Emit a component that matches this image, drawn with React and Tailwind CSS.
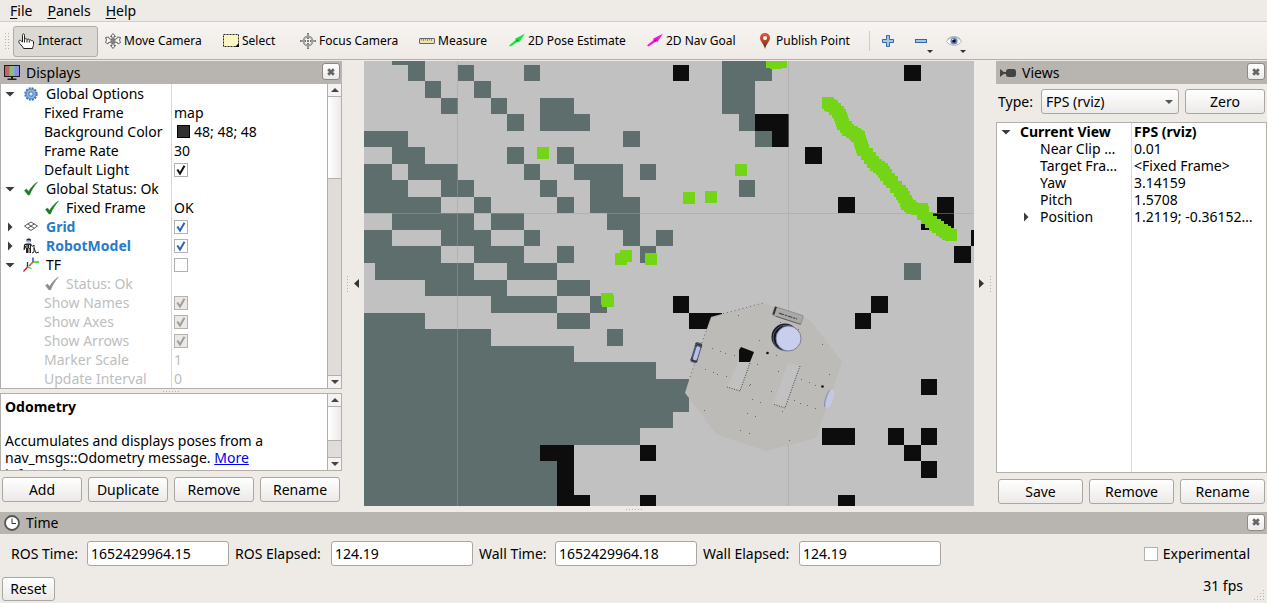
import React from "react";

const BUTTON =
  "rounded-[3px] border border-[#aaa6a2] bg-linear-to-b from-white to-[#eceae8] text-center";

/* ---------- icons ---------- */

function HandIcon() {
  return (
    <svg viewBox="0 0 16 16" className="size-4 shrink-0">
      <path
        d="M4.500 9V2.300c0-2 2-2 2 0V6.500c.2-1.200 2.300-1.200 2.500.2.3-1 2.200-.8 2.300.5.5-.8 2-.5 2 .7.5-.6 2.200-.4 2.200.9v2.700c0 1.500-.9 2-.9 4H5.500C5.200 13.300 1 10.800.7 8.600c-.1-1.600 1.800-1.700 2.400-.7z"
        fill="#fff"
        stroke="#222"
      />
      <path d="M6.500 6.500v3M9 7v2.500M11.300 7.500v2" stroke="#222" fill="none" />
    </svg>
  );
}

function MoveIcon() {
  return (
    <svg viewBox="0 0 16 16" className="size-4 shrink-0" fill="#f6f3f0" stroke="#555" strokeWidth="0.9">
      <path d="M8 .5 10.500 3.500H9V6H7V3.500H5.500zM8 15.500 5.500 12.500H7V10h2v2.500h1.500z" />
      <path d="M.5 4.500 3.500 4 4 5.500 7.500 7 7 9 3.500 9.500 3 11 .5 9.500 1.500 7zM15.500 4.500 12.500 4 12 5.500 8.500 7 9 9l3.500.5.5 1.500 2.500-1.500-1-2.500z" />
      <circle cx="8" cy="8" r="2" />
      <path d="M8 6.500v3M6.500 8h3" />
    </svg>
  );
}

function SelectIcon() {
  return (
    <svg viewBox="0 0 16 16" className="size-4 shrink-0">
      <rect x=".5" y="1.500" width="15" height="12" fill="#fbf5c0" stroke="#222" strokeDasharray="2 1" />
      <path d="M16 10v4h-4z" fill="#000" />
    </svg>
  );
}

function FocusIcon() {
  return (
    <svg viewBox="0 0 16 16" className="size-4 shrink-0" fill="none" stroke="#777">
      <circle cx="8" cy="8" r="4.500" strokeWidth="1.800" />
      <circle cx="8" cy="8" r="4.500" stroke="#ddd" strokeWidth=".6" />
      <path d="M8 0v6M8 10v6M0 8h6M10 8h6" strokeWidth="2" />
      <path d="M8 1v4M8 11v4M1 8h4M11 8h4" stroke="#ddd" strokeWidth=".7" />
      <path d="M7 8h2M8 7v2" stroke="#555" />
    </svg>
  );
}

function MeasureIcon() {
  return (
    <svg viewBox="0 0 16 16" className="size-4 shrink-0">
      <rect x=".5" y="5.500" width="15" height="5" rx=".5" fill="#ece3ae" stroke="#666" />
      <path d="M2.500 6v1.500M4.500 6v2M6.500 6v1.500M8.500 6v2M10.500 6v1.500M12.500 6v2" stroke="#777" strokeWidth=".8" />
    </svg>
  );
}

function ArrowIcon({ color, dark }) {
  return (
    <svg viewBox="0 0 16 16" className="size-4 shrink-0">
      <path d="M0 12.500 6.500 7 6 5.800 15.800.8 10.500 9 9 8.500 1.500 13.500z" fill={color} />
      <path d="m7 8 2.500-2L9 8.500z" fill={dark} />
    </svg>
  );
}

function PinIcon() {
  return (
    <svg viewBox="0 0 16 16" className="size-4 shrink-0">
      <defs>
        <linearGradient id="pin" x1="0" y1="0" x2="0" y2="1">
          <stop offset="0" stopColor="#ea5233" />
          <stop offset=".5" stopColor="#b8442a" />
          <stop offset="1" stopColor="#3d2a18" />
        </linearGradient>
      </defs>
      <path d="M8 0c3 0 5 2.200 5 5 0 3.500-4 6-5 11C7 11 3 8.500 3 5c0-2.800 2-5 5-5z" fill="url(#pin)" />
      <circle cx="8" cy="5" r="2" fill="#fff" />
    </svg>
  );
}

function PlusIcon() {
  return (
    <svg viewBox="0 0 16 16" className="size-4 shrink-0">
      <path d="M6.500 2.500h3v4h4v3h-4v4h-3v-4h-4v-3h4z" fill="#a9c5e6" stroke="#3465a4" />
    </svg>
  );
}

function MinusIcon() {
  return (
    <svg viewBox="0 0 16 16" className="size-4 shrink-0">
      <rect x="2.500" y="6.500" width="11" height="3" fill="#a9c5e6" stroke="#3465a4" />
    </svg>
  );
}

function EyeIcon() {
  return (
    <svg viewBox="0 0 16 16" className="size-4 shrink-0">
      <path d="M.5 8.500C4 2.500 12 2.500 15.500 8.500 12 13.500 4 13.500.5 8.500z" fill="#fbfbfb" stroke="#b5b3b0" />
      <path d="M1.500 6.500C4.500 2.800 11.500 2.800 14.500 6.500" fill="none" stroke="#aaa" />
      <circle cx="8" cy="8" r="3.600" fill="#6f86c4" />
      <circle cx="8" cy="8" r="1.800" fill="#0c1230" />
      <circle cx="6.800" cy="6.500" r=".8" fill="#dfe6ff" />
    </svg>
  );
}

function MonitorIcon() {
  return (
    <svg viewBox="0 0 16 16" className="size-4 shrink-0">
      <path d="M1 1h4.700v10H1z" fill="#c06464" />
      <path d="M5.700 1h4.600v10H5.700z" fill="#7cc57c" />
      <path d="M10.300 1H15v10h-4.700z" fill="#8f8fe0" />
      <rect x=".5" y=".5" width="15" height="11" fill="none" stroke="#1a1a1a" />
      <path d="M7 12h2v1.500h3.500v1.500h-9v-1.500H7z" fill="#222" />
    </svg>
  );
}

function CameraIcon() {
  return (
    <svg viewBox="0 0 16 16" className="size-4 shrink-0" fill="#444">
      <path d="m0 4 5 4-5 4zM4 7h3v2H4z" />
      <rect x="6" y="4" width="10" height="8" rx="2.500" />
    </svg>
  );
}

function ClockIcon() {
  return (
    <svg viewBox="0 0 16 16" className="size-4 shrink-0">
      <circle cx="8" cy="8" r="7" fill="#fff" stroke="#555" strokeWidth="1.800" />
      <path d="M8 3.500v5h4" fill="none" stroke="#333" />
    </svg>
  );
}

function GearIcon() {
  return (
    <svg viewBox="0 0 16 16" className="size-4 shrink-0">
      <circle cx="8" cy="8" r="5.700" fill="none" stroke="#3f74b5" strokeWidth="2" strokeDasharray="1.900 1.080" />
      <circle cx="8" cy="8" r="5" fill="#8fb3dd" stroke="#3f74b5" strokeWidth=".8" />
      <circle cx="8" cy="8" r="2.200" fill="#dce8f5" stroke="#3f74b5" />
    </svg>
  );
}

function TickIcon({ color }) {
  return (
    <svg viewBox="0 0 16 16" className="size-4 shrink-0">
      <path d="M1.500 9.500 3.500 8l2 2.600C7.500 7 10.500 3.500 14.500 1 11 5 8.500 9 6.500 14H5z" fill={color} stroke={color} strokeWidth=".5" />
    </svg>
  );
}

function GridIcon() {
  return (
    <svg viewBox="0 0 16 16" className="size-4 shrink-0" fill="none" stroke="#444" strokeWidth=".9">
      <path d="m1.500 7 6.500-4 6.500 4-6.500 4.500zM4.800 5 11.200 9.200M11.200 5 4.800 9.200" />
    </svg>
  );
}

function RobotIcon() {
  return (
    <svg viewBox="0 0 16 16" className="size-4 shrink-0">
      <path d="M3.500 1.500C4 0 7.500 0 8 1.500v2H3.500z" fill="#222a4a" />
      <path d="M4 2.200h3.500v.8H4z" fill="#8ea4d8" />
      <path d="M4 3.500h3.500v2H4z" fill="#ddd" />
      <path d="M1 6.500 3 5.500h5l1 2-1 1v6.500H6.500v-4l-1-1V15H3V9L1.500 12H.5z" fill="#222" />
      <path d="M4 7v3M6.500 7v3M2 7.500h1" stroke="#fff" strokeWidth=".8" />
      <path d="M9 8.500 11 7v7M11 10l2 5 3-1M9 15l2-1" stroke="#222" fill="none" />
    </svg>
  );
}

function AxesIcon() {
  return (
    <svg viewBox="0 0 16 16" className="size-4 shrink-0" fill="none" strokeWidth="1.300">
      <path d="M4.500 10V5M10 5V.5" stroke="#22d" />
      <path d="M4.500 10 8.500 11.500M10 5h6" stroke="#0d2" />
      <path d="M4.500 10 .5 14.500M10 5 6 9" stroke="#e01010" />
      <path d="m4.500 10 5.500-5" stroke="#d9a020" strokeWidth=".7" />
    </svg>
  );
}

function Caret({ open }) {
  return (
    <svg viewBox="0 0 10 10" className="size-[10px] shrink-0" fill="#3c3c3c">
      <path d={open ? "M.5 3h9L5 7.500z" : "M3 .5v9L7.500 5z"} />
    </svg>
  );
}

function DropCaret() {
  return (
    <svg viewBox="0 0 6 3" className="absolute -right-1 -bottom-1 h-[3px] w-[6px]" fill="#333">
      <path d="M0 0h6L3 3z" />
    </svg>
  );
}

/* ---------- shared controls ---------- */

function Check({ label, tint = "#111", checked, disabled }) {
  return (
    <span className="grid size-[14px] shrink-0">
      <input
        type="checkbox"
        aria-label={label}
        defaultChecked={checked}
        disabled={disabled}
        className="peer col-start-1 row-start-1 size-[14px] appearance-none border border-[#b5b1ad] bg-white disabled:bg-[#ebe8e5]"
      />
      <svg
        viewBox="0 0 14 14"
        className="pointer-events-none col-start-1 row-start-1 hidden size-[14px] peer-checked:block"
      >
        <path d="M3.300 6.500 6 10.500 10.500 2.800" fill="none" stroke={tint} strokeWidth="2" />
      </svg>
    </span>
  );
}

function PanelHeader({ icon, title, size = "h-[23px]" }) {
  return (
    <header className={"flex items-center gap-1.5 bg-[#b8b4b0] pr-0.5 pl-1 " + size}>
      {icon}
      <h2 className="flex-1">{title}</h2>
      <button
        aria-label={"Close " + title}
        className="mb-0.5 flex h-[17px] w-[18px] items-center justify-center rounded-[3px] border border-[#8d8985] bg-linear-to-b from-white to-[#eceae8]"
      >
        <svg viewBox="0 0 8 8" className="size-2">
          <path d="m1.200 1.200 5.600 5.600M6.800 1.200 1.200 6.800" stroke="#666" strokeWidth="2.800" />
        </svg>
      </button>
    </header>
  );
}

function Scrollbar({ thumb }) {
  const arrow = "flex h-[13px] shrink-0 items-center justify-center bg-[#f5f3f1]";
  return (
    <div aria-hidden="true" className="flex w-[14px] shrink-0 flex-col border-l border-[#b3afab] bg-[#dfdcd9]">
      <div className={arrow + " border-b border-[#b3afab]"}>
        <svg viewBox="0 0 8 4" className="h-1 w-2" fill="#444">
          <path d="M0 4h8L4 0z" />
        </svg>
      </div>
      <div className={"shrink-0 border-b border-[#b3afab] bg-linear-to-r from-white to-[#eceae8] " + thumb} />
      <div className="flex-1" />
      <div className={arrow + " border-t border-[#b3afab]"}>
        <svg viewBox="0 0 8 4" className="h-1 w-2" fill="#444">
          <path d="M0 0h8L4 4z" />
        </svg>
      </div>
    </div>
  );
}

function Dots({ vertical, tall }) {
  return vertical ? (
    <svg viewBox="0 0 1 16" className={tall ? "h-4 w-px" : "h-4 w-px"} shapeRendering="crispEdges">
      <path d="M.5 0v16" stroke="#b3afab" strokeDasharray="1 2" />
    </svg>
  ) : (
    <svg viewBox="0 0 16 1" className="h-px w-4" shapeRendering="crispEdges">
      <path d="M0 .5h16" stroke="#b3afab" strokeDasharray="1 2" />
    </svg>
  );
}

/* ---------- menu and tool bar ---------- */

const MENUS = ["File", "Panels", "Help"];

const TOOLS = [
  { label: "Interact", icon: <HandIcon />, size: "w-[85px]", active: true },
  { label: "Move Camera", icon: <MoveIcon />, size: "w-[118px]" },
  { label: "Select", icon: <SelectIcon />, size: "w-[77px]" },
  { label: "Focus Camera", icon: <FocusIcon />, size: "w-[119px]" },
  { label: "Measure", icon: <MeasureIcon />, size: "w-[90px]" },
  { label: "2D Pose Estimate", icon: <ArrowIcon color="#12e83a" dark="#0b7a20" />, size: "w-[138px]" },
  { label: "2D Nav Goal", icon: <ArrowIcon color="#f516d8" dark="#8a0b78" />, size: "w-[110px]" },
  { label: "Publish Point", icon: <PinIcon />, size: "w-[113px]" },
];

function MenuBar() {
  return (
    <nav className="flex h-[22px] items-center gap-[15px] border-b border-[#d2cecb] px-2.5">
      {MENUS.map((name) => (
        <button key={name}>
          <span className="underline underline-offset-2">{name[0]}</span>
          {name.slice(1)}
        </button>
      ))}
    </nav>
  );
}

function ToolBar() {
  return (
    <div
      role="toolbar"
      className="flex h-[38px] items-center border-b border-[#b3afab] bg-linear-to-b from-[#f7f4f1] to-[#eeeae6] pt-px pl-[5px] text-xs"
    >
      <div className="flex w-[8px] gap-0.5">
        <Dots vertical />
        <Dots vertical />
      </div>
      {TOOLS.map((tool) => (
        <button
          key={tool.label}
          aria-pressed={!!tool.active}
          className={
            "flex h-[31px] shrink-0 items-center rounded-[3px] border whitespace-nowrap " +
            tool.size +
            (tool.active
              ? " gap-1 border-[#b0aca8] bg-[#dcd9d5] px-1"
              : " gap-[3px] border-transparent px-1.5")
          }
        >
          {tool.icon}
          {tool.label}
        </button>
      ))}
      <div className="ml-1.5 h-5 w-px bg-[#cfcbc7]" />
      <div className="flex gap-[17px] pl-2.5">
        <button aria-label="Add tool">
          <PlusIcon />
        </button>
        <button aria-label="Remove tool" className="relative">
          <MinusIcon />
          <DropCaret />
        </button>
        <button aria-label="Tool bar visibility" className="relative">
          <EyeIcon />
          <DropCaret />
        </button>
      </div>
    </div>
  );
}

/* ---------- displays panel ---------- */

const GREEN = "#1d7a26";
const DISPLAY_ROWS = [
  { name: "Global Options", caret: "open", icon: <GearIcon /> },
  { name: "Fixed Frame", value: "map" },
  { name: "Background Color", value: "48; 48; 48", swatch: true },
  { name: "Frame Rate", value: "30" },
  { name: "Default Light", check: { checked: true } },
  { name: "Global Status: Ok", caret: "open", icon: <TickIcon color={GREEN} /> },
  { name: "Fixed Frame", value: "OK", childIcon: <TickIcon color={GREEN} /> },
  { name: "Grid", caret: "closed", icon: <GridIcon />, enabled: true, check: { checked: true, tint: "#2a66ad" } },
  { name: "RobotModel", caret: "closed", icon: <RobotIcon />, enabled: true, check: { checked: true, tint: "#2a66ad" } },
  { name: "TF", caret: "open", icon: <AxesIcon />, check: {} },
  { name: "Status: Ok", muted: true, childIcon: <TickIcon color="#8c8c8c" /> },
  { name: "Show Names", muted: true, check: { checked: true, disabled: true, tint: "#a09d9a" } },
  { name: "Show Axes", muted: true, check: { checked: true, disabled: true, tint: "#a09d9a" } },
  { name: "Show Arrows", muted: true, check: { checked: true, disabled: true, tint: "#a09d9a" } },
  { name: "Marker Scale", muted: true, value: "1" },
  { name: "Update Interval", muted: true, value: "0" },
];

function DisplayRow({ row }) {
  const tone = row.muted ? "text-[#bebebe]" : row.enabled ? "font-bold text-[#2a7ac6]" : "";
  return (
    <tr className={"h-[19px] " + tone}>
      <td className="w-[171px] p-0">
        {row.caret ? (
          <div className="flex h-[19px] items-center border-r border-[#dcdad8] pl-1">
            <Caret open={row.caret === "open"} />
            <span className="flex w-[31px] justify-center">{row.icon}</span>
            {row.name}
          </div>
        ) : (
          <div className="flex h-[19px] items-center gap-1.5 border-r border-[#dcdad8] pl-[43px] whitespace-nowrap">
            {row.childIcon}
            {row.name}
          </div>
        )}
      </td>
      <td className="p-0">
        <div className="flex h-[19px] items-center pl-0.5">
          {row.swatch && <span className="mr-1 ml-[3px] size-[13px] border border-black bg-[#303030]" />}
          {row.check && <Check label={row.name} {...row.check} />}
          {row.value}
        </div>
      </td>
    </tr>
  );
}

function DisplaysPanel() {
  return (
    <section className="flex w-[342px] shrink-0 flex-col pb-1">
      <PanelHeader icon={<MonitorIcon />} title="Displays" />
      <div className="flex flex-1 border border-t-0 border-[#b3afab] bg-white">
        <div className="min-w-0 flex-1">
          <table className="w-full table-fixed border-collapse">
            <tbody>
              {DISPLAY_ROWS.map((row, i) => (
                <DisplayRow key={i} row={row} />
              ))}
            </tbody>
          </table>
        </div>
        <Scrollbar thumb="h-[82px]" />
      </div>
      <div className="flex h-1 items-center justify-center">
        <Dots />
      </div>
      <div className="flex h-[78px] overflow-hidden border border-[#b3afab] bg-white">
        <div className="flex-1 overflow-hidden p-1 leading-[17px]">
          <h3 className="mb-[17px] font-bold">Odometry</h3>
          <p>
            Accumulates and displays poses from a nav_msgs::Odometry message.{" "}
            <a href="#odometry" className="text-[#0000ee] underline">
              More
              <br />
              information
            </a>
            .
          </p>
        </div>
        <Scrollbar thumb="h-[34px]" />
      </div>
      <div className="mt-1.5 grid grid-cols-4 gap-1.5 px-0.5">
        {["Add", "Duplicate", "Remove", "Rename"].map((name) => (
          <button key={name} className={BUTTON + " h-[25px]"}>
            {name}
          </button>
        ))}
      </div>
    </section>
  );
}

/* ---------- map view ---------- */

const CELL = 16.54;
// Each entry is [row, first column, end column] in occupancy grid cells.
const UNKNOWN = [
  [0, 2, 4], [0, 22, 25],
  [1, 3, 4], [1, 6, 7], [1, 10, 11], [1, 22, 25],
  [2, 4, 5], [2, 7, 8], [2, 22, 24],
  [3, 5, 6], [3, 8, 9], [3, 11, 13], [3, 22, 24],
  [4, 9, 10], [4, 11, 14], [4, 23, 24],
  [5, 0, 3], [5, 16, 17], [5, 24, 25],
  [6, 2, 4], [6, 9, 10], [6, 12, 13],
  [7, 0, 2], [7, 3, 6], [7, 10, 11], [7, 13, 16], [7, 17, 18],
  [8, 0, 3], [8, 5, 7], [8, 11, 12], [8, 14, 16], [8, 23, 24],
  [9, 0, 5], [9, 7, 8], [9, 12, 13], [9, 14, 17],
  [10, 2, 7], [10, 8, 10], [10, 15, 17],
  [11, 0, 2], [11, 5, 8], [11, 10, 11], [11, 16, 17], [11, 18, 19],
  [12, 0, 5], [12, 7, 10], [12, 12, 13], [12, 17, 18],
  [13, 1, 7], [13, 9, 12], [13, 33, 34],
  [14, 4, 9], [14, 12, 14],
  [15, 8, 12], [15, 14, 15],
  [16, 0, 4], [16, 12, 14],
  [17, 0, 8], [17, 15, 16],
  [18, 0, 13], [19, 0, 18], [20, 0, 20], [21, 0, 20], [22, 0, 19], [23, 0, 17],
  [24, 0, 11], [25, 0, 12], [26, 0, 12], [27, 0, 12],
];
const OCCUPIED = [
  [1, 19, 20], [1, 33, 34], [4, 24, 26], [5, 25, 26], [6, 27, 28],
  [9, 29, 30], [9, 35, 36], [10, 34, 36], [11, 37, 38], [12, 36, 37],
  [15, 19, 20], [15, 31, 32], [16, 20, 22], [16, 30, 31], [20, 34, 35],
  [23, 28, 30], [23, 32, 33], [23, 34, 35], [24, 11, 13], [24, 17, 18],
  [24, 33, 34], [25, 12, 13], [25, 34, 35], [26, 12, 13],
  [27, 12, 14], [27, 17, 18], [27, 29, 30],
];
const WALL = [
  [464, 42], [468, 45], [474, 51], [477, 57], [479, 63], [484, 69], [491, 73], [495, 76],
  [497, 83], [499, 89], [506, 97], [512, 104], [518, 108], [522, 114], [528, 121],
  [536, 130], [540, 136], [543, 143], [548, 147], [558, 148], [559, 153], [567, 161],
  [574, 166], [581, 171], [587, 174],
];
const HITS = [
  [179, 92], [377, 109], [325, 137], [347, 136], [257, 198], [262, 195], [287, 198],
  [243, 238], [244, 240], [408, 1], [412, 2], [417, 1],
];
const SCREWS = [
  [348, 287], [356, 290], [361, 292], [370, 294], [341, 308], [349, 311], [353, 313], [362, 315],
  [395, 279], [393, 303], [386, 323], [385, 324], [388, 338], [396, 341], [383, 352], [391, 355],
  [407, 330], [414, 310], [412, 294], [437, 318], [445, 321], [451, 324], [430, 339], [436, 342],
  [443, 344], [451, 347], [340, 349], [376, 369], [385, 372], [425, 379], [465, 313], [458, 283],
  [374, 254], [416, 261], [434, 268], [418, 350],
];

const colX = (c) => Math.round(27.6 + (c - 2) * CELL);
const rowY = (r) => Math.round(3.5 + (r - 1) * CELL);

function Cells({ cells, fill }) {
  return (
    <g fill={fill}>
      {cells.map(([r, a, b]) => (
        <rect key={r + "-" + a} x={colX(a)} y={rowY(r)} width={colX(b) - colX(a)} height={rowY(r + 1) - rowY(r)} />
      ))}
    </g>
  );
}

function scanPoints() {
  const points = [...HITS];
  WALL.forEach(([x, y], i) => {
    const [nx, ny] = WALL[i + 1] || [x, y];
    for (let t = 0; t < 1; t += 0.5) {
      points.push([Math.round(x + (nx - x) * t), Math.round(y + (ny - y) * t)]);
    }
  });
  return points;
}

function Robot() {
  return (
    <g>
      <polygon points="399,242 446,259 478,301 452,377 402,390 352,373 325,337 321,332 326,316 347,256" fill="#bdbbb8" />
      <path d="M326 316 347 256 399 242" fill="none" stroke="#555" strokeWidth=".8" strokeDasharray="1 3" />
      <g transform="rotate(17 332 291)">
        <rect x="329" y="281" width="7" height="21" rx="2" fill="#555b6c" />
        <path d="M329 283h7M329 285h7M329 298h7M329 300h7" stroke="#22252e" strokeWidth=".8" />
        <rect x="331" y="285" width="4" height="14" rx="1" fill="#b6c0ec" />
      </g>
      <g transform="rotate(17 466 338)">
        <ellipse cx="466" cy="338" rx="3" ry="10" fill="#c2c8e6" />
        <path d="M463 330a3 10 0 0 0 0 17" fill="none" stroke="#8489a5" strokeWidth=".8" />
      </g>
      <path d="m375 300-12 26 13 4 11-30" fill="#c1c1c1" />
      <path d="m386 302-10 28-13-4" fill="none" stroke="#333" strokeWidth=".9" strokeDasharray="1 1.500" />
      <path d="m377 286 13 5-4 10h-11v-12z" fill="#0d0d0d" />
      <path d="m424 302-15 41 12 4 15-42-12-3z" fill="#c1c1c1" />
      <path d="m436 305-15 42-12-4" fill="none" stroke="#333" strokeWidth=".9" strokeDasharray="1 1.500" />
      <g transform="rotate(18 424 254)">
        <rect x="409" y="250" width="30" height="9" rx="1" fill="#aaa9a7" stroke="#888" strokeWidth=".8" />
        <path d="M409 250h2v8h-2z" fill="#333" />
        <path d="M415 255h19" stroke="#444" strokeWidth="1.200" strokeDasharray="5 1 2 1" />
        <path d="M413 259h26" stroke="#555" strokeWidth=".7" />
      </g>
      <circle cx="421" cy="276" r="13.500" fill="#14161d" />
      <circle cx="422" cy="277" r="13" fill="none" stroke="#777d99" strokeWidth=".7" />
      <circle cx="424.500" cy="277.500" r="12.500" fill="#c8ceec" stroke="#72788f" strokeWidth=".9" />
      <g fill="#6b6a68">
        {SCREWS.map(([x, y]) => (
          <rect key={x + "-" + y} x={x} y={y} width="1" height="1" />
        ))}
      </g>
      <circle cx="403.500" cy="292" r="1.300" fill="#111" />
      <circle cx="458.500" cy="325.500" r="1.300" fill="#111" />
    </g>
  );
}

function MapView() {
  return (
    <main className="flex min-w-0 flex-1 flex-col">
      <svg
        role="img"
        aria-label="Occupancy map with laser scan and robot"
        viewBox="0 0 610 445"
        preserveAspectRatio="xMidYMid slice"
        className="h-0 w-full flex-1 bg-[#c1c1c1]"
      >
        <g shapeRendering="crispEdges">
          <Cells cells={UNKNOWN} fill="#5e6e6c" />
          <Cells cells={OCCUPIED} fill="#0d0d0d" />
          <path d="M93.500 0v445M424.500 0v445M0 152.500h610" stroke="#a0a0a0" strokeOpacity=".45" />
        </g>
        <Robot />
        <g fill="#74d416" shapeRendering="crispEdges">
          {scanPoints().map(([x, y], i) => (
            <rect key={i} x={x - 6} y={y - 6} width="12" height="12" />
          ))}
        </g>
      </svg>
    </main>
  );
}

function Splitter({ direction }) {
  return (
    <button aria-label={"Collapse " + direction + " panel"} className="flex w-[22px] shrink-0 items-center justify-center gap-1.5">
      {direction === "left" && <Dots vertical />}
      <svg viewBox="0 0 5 9" className="h-[9px] w-[5px]" fill="#333">
        <path d={direction === "left" ? "M5 0v9L0 4.500z" : "M0 0v9l5-4.500z"} />
      </svg>
      {direction === "right" && <Dots vertical />}
    </button>
  );
}

/* ---------- views panel ---------- */

const VIEW_ROWS = [
  ["Near Clip …", "0.01"],
  ["Target Fra…", "<Fixed Frame>"],
  ["Yaw", "3.14159"],
  ["Pitch", "1.5708"],
  ["Position", "1.2119; -0.36152…"],
];

function ViewsPanel() {
  return (
    <section className="flex w-[271px] shrink-0 flex-col pb-0.5">
      <PanelHeader icon={<CameraIcon />} title="Views" />
      <div className="flex items-center px-0.5 py-[5px]">
        <label htmlFor="view-type" className="w-[43px]">
          Type:
        </label>
        <div className="relative w-[138px]">
          <select
            id="view-type"
            className="h-[25px] w-full appearance-none rounded-[3px] border border-[#aaa6a2] bg-linear-to-b from-white to-[#eceae8] pl-1"
          >
            <option>FPS (rviz)</option>
          </select>
          <svg viewBox="0 0 8 4" className="pointer-events-none absolute top-[11px] right-1.5 h-1 w-2" fill="#555">
            <path d="M0 0h8L4 4z" />
          </svg>
        </div>
        <button className={BUTTON + " ml-1.5 h-[25px] flex-1"}>Zero</button>
      </div>
      <div className="mt-[3px] flex-1 border border-[#b3afab] bg-white bg-linear-to-r from-[#dcdad8] to-[#dcdad8] bg-[length:1px_100%] bg-[position:134px_0] bg-no-repeat">
        <table className="w-full table-fixed leading-[17px]">
          <tbody>
            <tr className="font-bold">
              <td className="w-[135px] p-0">
                <div className="flex items-center gap-[9px] pl-1">
                  <Caret open />
                  Current View
                </div>
              </td>
              <td className="p-0 pl-0.5">FPS (rviz)</td>
            </tr>
            {VIEW_ROWS.map(([name, value]) => (
              <tr key={name}>
                <td className="p-0">
                  <div className="flex items-center pl-6">
                    <span className="w-[19px] shrink-0">{name === "Position" && <Caret />}</span>
                    {name}
                  </div>
                </td>
                <td className="p-0 pl-0.5 whitespace-nowrap">{value}</td>
              </tr>
            ))}
          </tbody>
        </table>
      </div>
      <div className="mt-1.5 grid grid-cols-3 gap-1.5 px-0.5">
        {["Save", "Remove", "Rename"].map((name) => (
          <button key={name} className={BUTTON + " h-[25px]"}>
            {name}
          </button>
        ))}
      </div>
    </section>
  );
}

/* ---------- time panel ---------- */

const CLOCKS = [
  { id: "ros-time", label: "ROS Time:", value: "1652429964.15", size: "w-[76px]" },
  { id: "ros-elapsed", label: "ROS Elapsed:", value: "124.19", size: "w-24" },
  { id: "wall-time", label: "Wall Time:", value: "1652429964.18", size: "w-[76px]" },
  { id: "wall-elapsed", label: "Wall Elapsed:", value: "124.19", size: "w-24" },
];

function TimePanel() {
  return (
    <section>
      <PanelHeader icon={<ClockIcon />} title="Time" size="h-[22px]" />
      <div className="flex items-center gap-1.5 pt-[7px] pr-[17px] pl-[11px]">
        {CLOCKS.map((clock) => (
          <div key={clock.id} className="flex items-center">
            <label htmlFor={clock.id} className={"whitespace-nowrap " + clock.size}>
              {clock.label}
            </label>
            <input
              id={clock.id}
              readOnly
              defaultValue={clock.value}
              className="h-[25px] w-[142px] rounded-[3px] border border-[#aaa6a2] bg-white px-[3px]"
            />
          </div>
        ))}
        <label className="ml-auto flex items-center gap-[5px]">
          <Check label="Experimental" />
          Experimental
        </label>
      </div>
    </section>
  );
}

function StatusBar() {
  return (
    <footer className="relative flex items-start justify-between pt-[11px] pr-6 pb-0.5 pl-0.5">
      <button className={BUTTON + " h-6 w-[53px]"}>Reset</button>
      <span>31 fps</span>
      <svg viewBox="0 0 12 12" className="absolute right-0.5 bottom-0.5 size-3" fill="#b3afab" shapeRendering="crispEdges">
        <path d="M10 1h1v1h-1zM7 4h1v1H7zM10 4h1v1h-1zM4 7h1v1H4zM7 7h1v1H7zM10 7h1v1h-1zM1 10h1v1H1zM4 10h1v1H4zM7 10h1v1H7zM10 10h1v1h-1z" />
      </svg>
    </footer>
  );
}

export default function App() {
  return (
    <div className="flex min-h-screen flex-col bg-[#eeeae6] font-['Noto_Sans','Open_Sans',sans-serif] text-sm leading-[18px] text-black">
      <MenuBar />
      <ToolBar />
      <div className="mt-px flex flex-1">
        <DisplaysPanel />
        <Splitter direction="left" />
        <MapView />
        <Splitter direction="right" />
        <ViewsPanel />
      </div>
      <div className="flex h-1.5 items-center justify-center">
        <Dots />
      </div>
      <TimePanel />
      <StatusBar />
    </div>
  );
}
